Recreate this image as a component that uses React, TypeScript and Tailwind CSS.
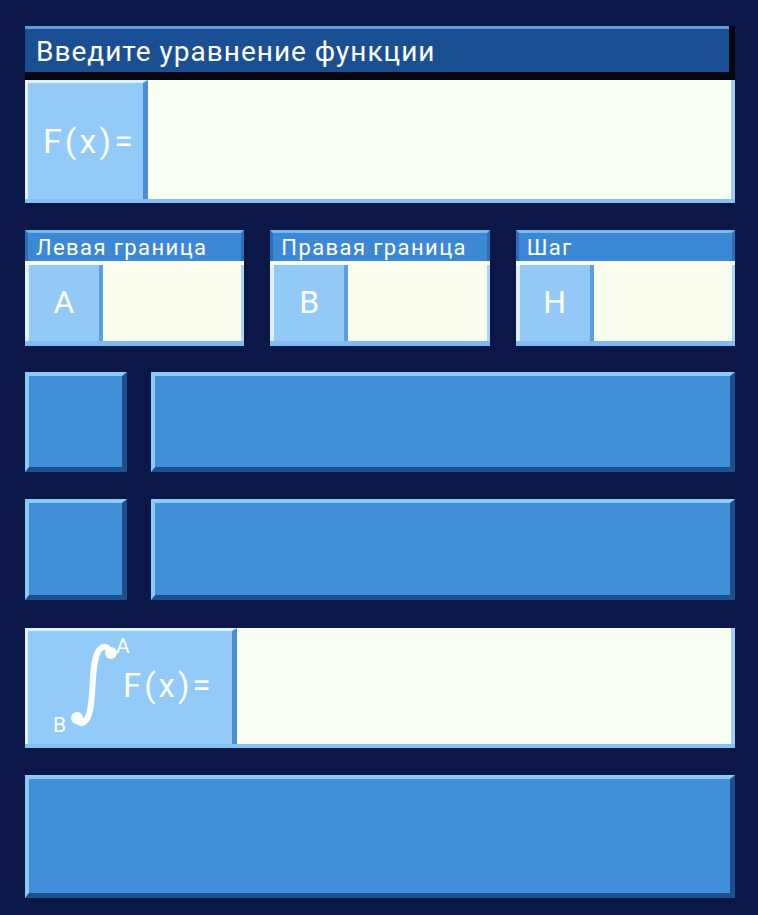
import React from "react";

const font = { fontFamily: "Roboto, 'Noto Sans', sans-serif" };

function Field({ label, letter }: { label: string; letter: string }) {
  return (
    <div className="flex flex-col">
      <div className="h-[31px] bg-[#3d88d4] border-t-[3px] border-[#79b6ee] border-l-[3px] border-l-[#2a6fb8] border-r-[3px] border-r-[#2a6fb8] text-white text-[22px] tracking-[1.4px] leading-[30px] pl-[8px] whitespace-nowrap">
        {label}
      </div>
      <div className="h-[85px] flex bg-[#f8fdf0] border-t-[4px] border-[#fbfff4] border-b-[5px] border-b-[#7fbaf0]">
        <div className="w-[78px] bg-[#92c9f7] border-l-[4px] border-[#dff0ff] border-r-[4px] border-r-[#5a9ee2] flex items-center justify-center text-white text-[32px] pb-[2px]">
          {letter}
        </div>
        <div className="flex-1 border-r-[3px] border-[#a9d4f6]" />
      </div>
    </div>
  );
}

function BlueBox({ className }: { className: string }) {
  return (
    <div
      className={`bg-[#418fd8] border-t-[4px] border-l-[4px] border-[#8ccaf8] border-b-[5px] border-b-[#1b4f92] border-r-[5px] border-r-[#1b4f92] ${className}`}
    />
  );
}

export default function App() {
  return (
    <div className="w-[758px] h-[915px] bg-[#0b1847] pl-[25px] pr-[23px] pt-[26px]" style={font}>
      {/* header */}
      <div className="bg-[#03060f] pr-[6px] pb-[8px]">
        <div className="h-[46px] bg-[#1b4f94] border-t-[3px] border-[#5b9be0] text-white text-[28px] tracking-[1px] leading-[46px] pl-[11px]">
          Введите уравнение функции
        </div>
      </div>

      {/* F(x) row */}
      <div className="h-[123px] flex bg-[#f7fff3] border-b-[4px] border-[#86c0f0]">
        <div className="w-[123px] bg-[#92caf8] border-l-[3px] border-t-[3px] border-[#e2f1ff] border-r-[5px] border-r-[#4a8fd6] flex items-center pl-[15px] text-white text-[34px] tracking-[3px]">
          F(x)=
        </div>
        <div className="flex-1 border-r-[4px] border-[#9fcdf4]" />
      </div>

      {/* bounds */}
      <div className="mt-[27px] grid grid-cols-3 gap-x-[26px]">
        <Field label="Левая граница" letter="A" />
        <Field label="Правая граница" letter="B" />
        <Field label="Шаг" letter="H" />
      </div>

      {/* result rows */}
      <div className="mt-[26px] flex gap-[24px] h-[100px]">
        <BlueBox className="w-[102px]" />
        <BlueBox className="flex-1" />
      </div>
      <div className="mt-[27px] flex gap-[24px] h-[101px]">
        <BlueBox className="w-[102px]" />
        <BlueBox className="flex-1" />
      </div>

      {/* integral row */}
      <div className="mt-[28px] h-[120px] flex bg-[#f7fff3] border-b-[4px] border-[#86c0f0]">
        <div className="relative w-[212px] bg-[#92caf8] border-l-[3px] border-t-[3px] border-[#e2f1ff] border-r-[5px] border-r-[#4a8fd6] text-white">
          <svg className="absolute left-[40px] top-[6px]" width="50" height="94" viewBox="0 0 50 94">
            <path d="M44 17 C41 9 35 8 31 13 C25 22 25 42 24 57 C23 72 21 84 14 86 C11 86 9 84 8 82" fill="none" stroke="white" strokeWidth="6" strokeLinecap="round" />
            <circle cx="43" cy="16" r="6" fill="white" />
            <circle cx="9" cy="81" r="6" fill="white" />
          </svg>
          <span className="absolute left-[88px] top-[5px] text-[21px] leading-none">A</span>
          <span className="absolute left-[25px] top-[84px] text-[21px] leading-none">B</span>
          <span className="absolute left-[95px] top-[38px] text-[33px] tracking-[3px] leading-none">F(x)=</span>
        </div>
        <div className="flex-1 border-r-[4px] border-[#9fcdf4]" />
      </div>

      {/* bottom bar */}
      <BlueBox className="mt-[27px] h-[123px] w-full" />
    </div>
  );
}
